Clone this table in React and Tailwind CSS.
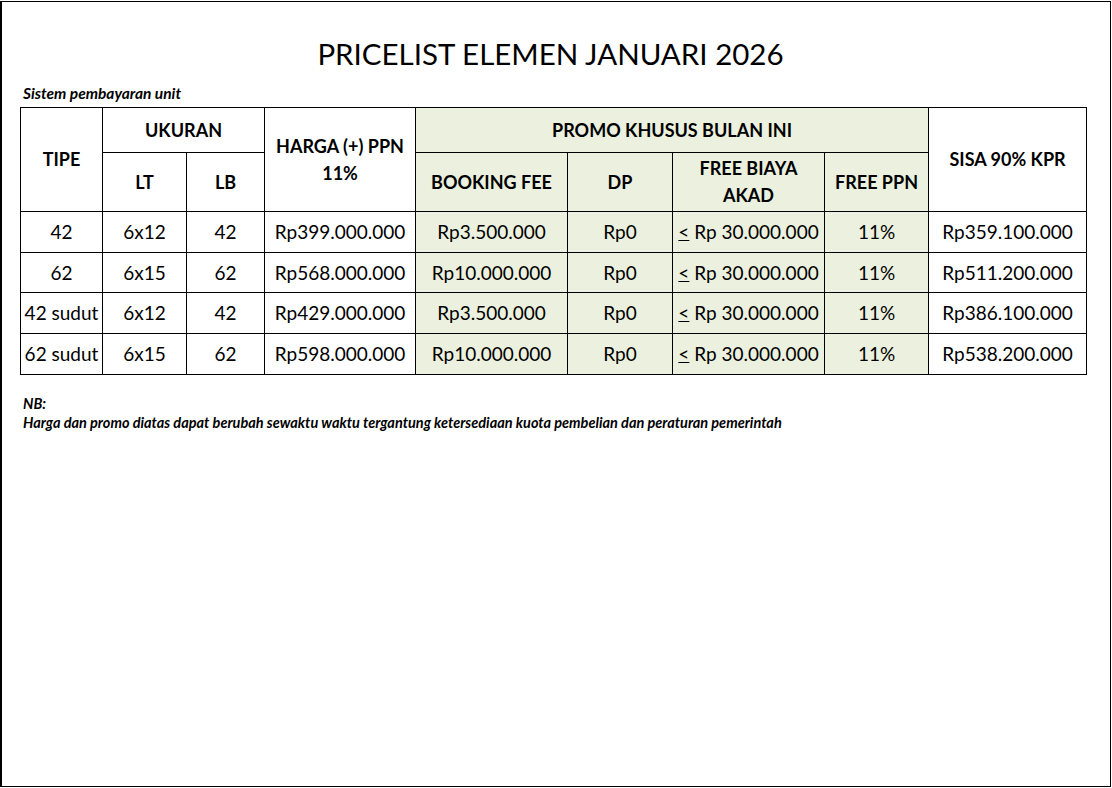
import React from "react";

const ROWS = [
  { tipe: "42", lt: "6x12", lb: "42", harga: "Rp399.000.000", booking: "Rp3.500.000", sisa: "Rp359.100.000" },
  { tipe: "62", lt: "6x15", lb: "62", harga: "Rp568.000.000", booking: "Rp10.000.000", sisa: "Rp511.200.000" },
  { tipe: "42 sudut", lt: "6x12", lb: "42", harga: "Rp429.000.000", booking: "Rp3.500.000", sisa: "Rp386.100.000" },
  { tipe: "62 sudut", lt: "6x15", lb: "62", harga: "Rp598.000.000", booking: "Rp10.000.000", sisa: "Rp538.200.000" },
];

const cell = "border border-black text-center align-middle p-0";
const green = "bg-[#ebf1de]";

export default function App() {
  return (
    <div className="w-[1112px] h-[788px] bg-white pt-px text-black" style={{ fontFamily: "Lato, 'Open Sans', sans-serif" }}>
      <div className="w-[1111px] h-[786px] border border-l-2 border-black pl-[18px] pr-[19px]">
        <h1 className="pt-[34px] pr-[10px] text-center text-[29.5px] leading-[36px] font-normal">
          PRICELIST ELEMEN JANUARI 2026
        </h1>
        <p className="mt-[12px] pl-[3px] text-[15.5px] leading-[18px] font-bold italic">Sistem pembayaran unit</p>
        <table className="mt-[5px] border-collapse table-fixed w-[1067px]">
          <colgroup>
            <col className="w-[82px]" />
            <col className="w-[84px]" />
            <col className="w-[78px]" />
            <col className="w-[151px]" />
            <col className="w-[152px]" />
            <col className="w-[105px]" />
            <col className="w-[152px]" />
            <col className="w-[104px]" />
            <col className="w-[158px]" />
          </colgroup>
          <thead className="text-[18px] leading-[27px] font-bold">
            <tr className="h-[45px]">
              <th rowSpan={2} className={`${cell} font-bold`}>TIPE</th>
              <th colSpan={2} className={`${cell} font-bold`}>UKURAN</th>
              <th rowSpan={2} className={`${cell} font-bold`}>HARGA (+) PPN<br />11%</th>
              <th colSpan={4} className={`${cell} ${green} font-bold`}>PROMO KHUSUS BULAN INI</th>
              <th rowSpan={2} className={`${cell} font-bold`}>SISA 90% KPR</th>
            </tr>
            <tr className="h-[59px]">
              <th className={`${cell} font-bold`}>LT</th>
              <th className={`${cell} font-bold`}>LB</th>
              <th className={`${cell} ${green} font-bold`}>BOOKING FEE</th>
              <th className={`${cell} ${green} font-bold`}>DP</th>
              <th className={`${cell} ${green} font-bold`}>FREE BIAYA<br />AKAD</th>
              <th className={`${cell} ${green} font-bold`}>FREE PPN</th>
            </tr>
          </thead>
          <tbody className="text-[19px] leading-[24px]">
            {ROWS.map((r, i) => (
              <tr key={r.tipe} className={i === 1 ? "h-[40px]" : "h-[41px]"}>
                <td className={`${cell} whitespace-nowrap`}>{r.tipe}</td>
                <td className={cell}>{r.lt}</td>
                <td className={cell}>{r.lb}</td>
                <td className={cell}>{r.harga}</td>
                <td className={`${cell} ${green}`}>{r.booking}</td>
                <td className={`${cell} ${green}`}>Rp0</td>
                <td className={`${cell} ${green} whitespace-nowrap`}>
                  <span className="underline">&lt;</span> Rp 30.000.000
                </td>
                <td className={`${cell} ${green}`}>11%</td>
                <td className={cell}>{r.sisa}</td>
              </tr>
            ))}
          </tbody>
        </table>
        <div className="mt-[19px] pl-[3px] text-[14.5px] leading-[19px] font-bold italic">
          <p>NB:</p>
          <p>Harga dan promo diatas dapat berubah sewaktu waktu tergantung ketersediaan kuota pembelian dan peraturan pemerintah</p>
        </div>
      </div>
    </div>
  );
}
